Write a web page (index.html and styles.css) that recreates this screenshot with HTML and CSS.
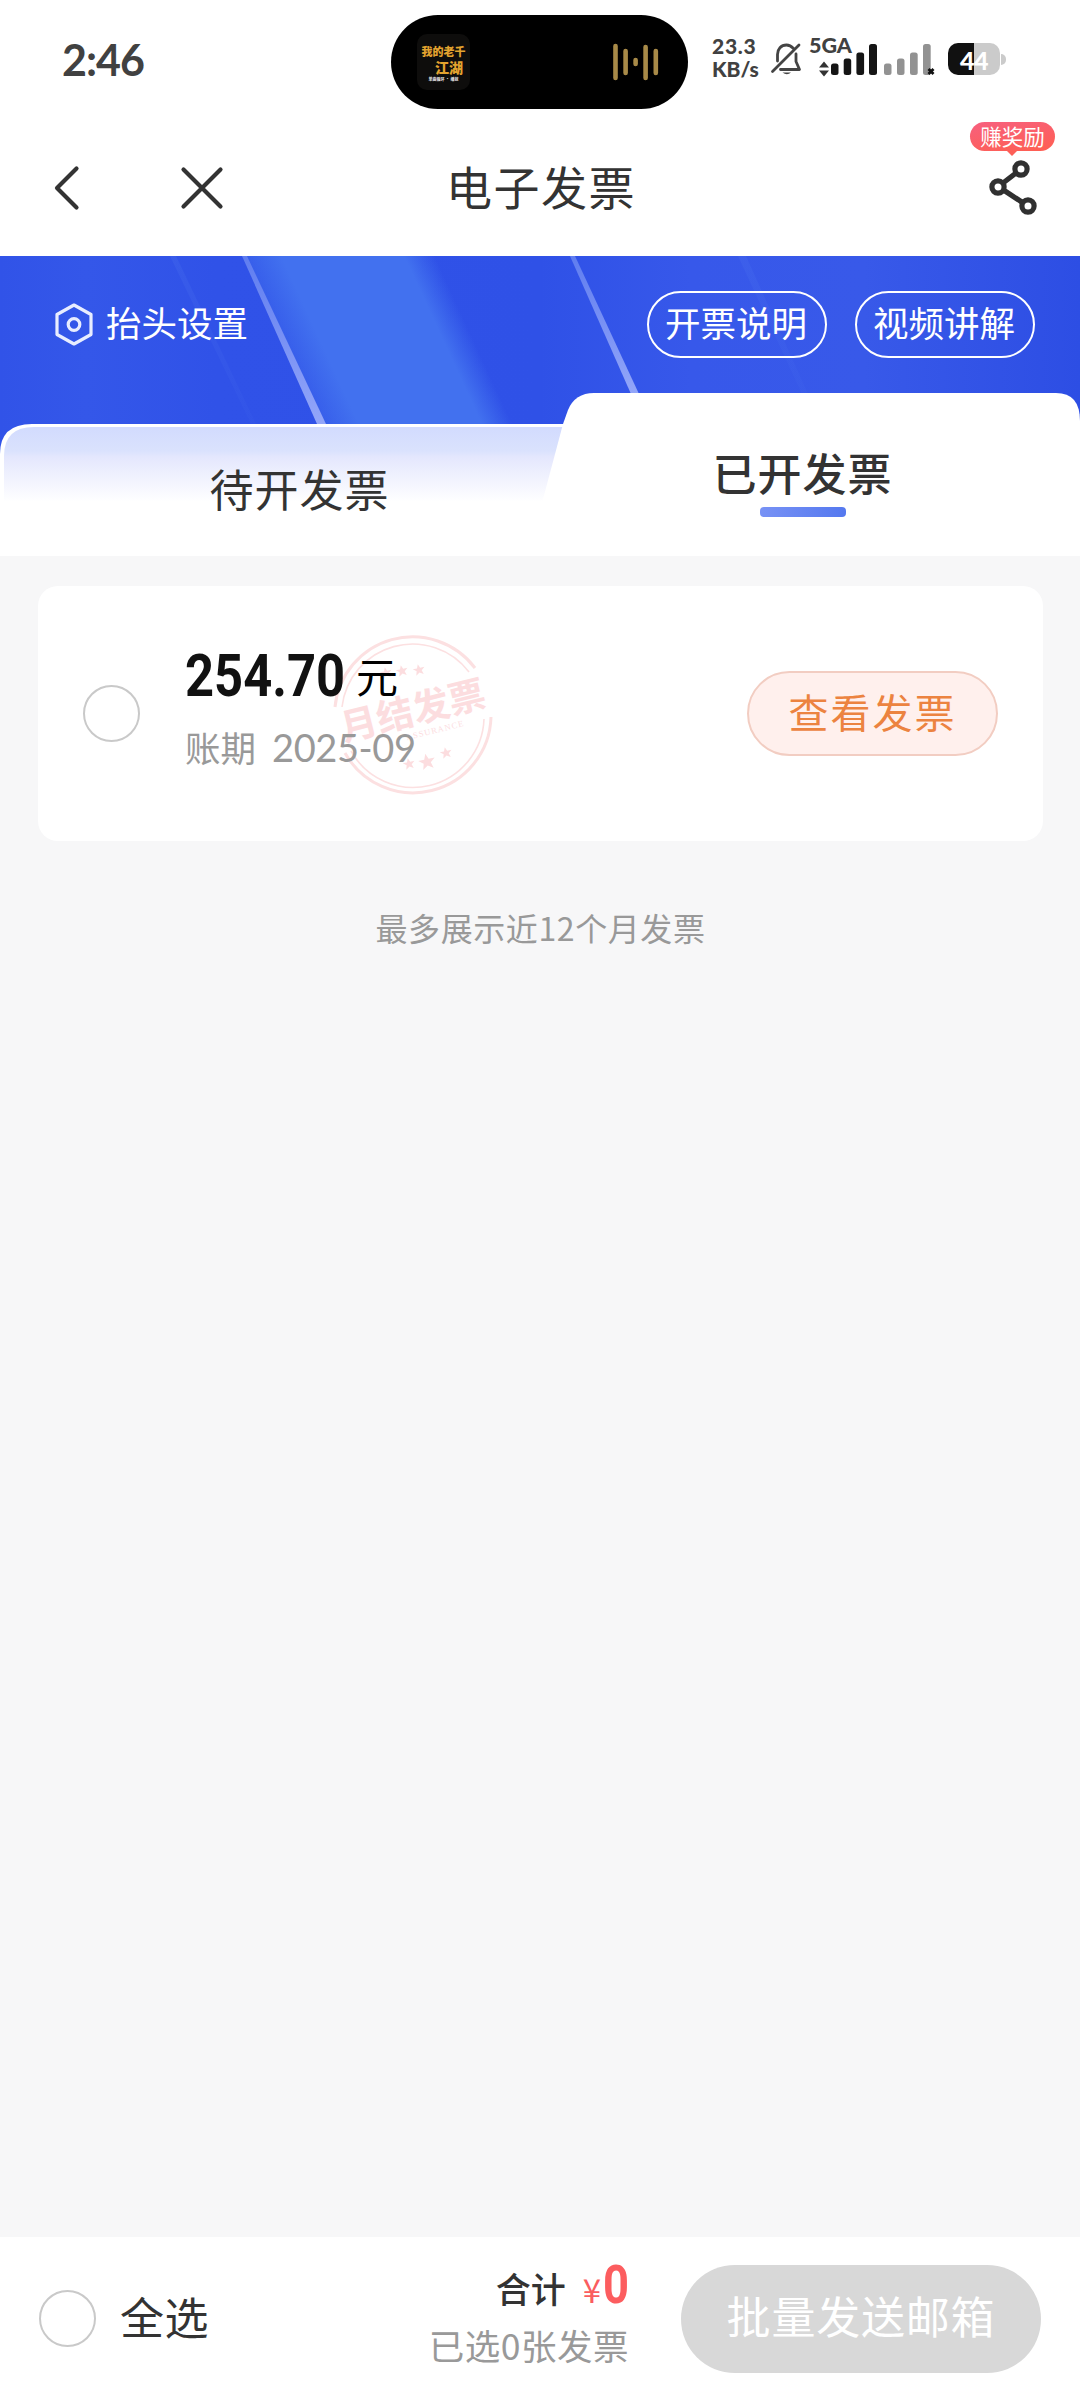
FILE: index.html
```html
<!DOCTYPE html>
<html lang="zh-CN">
<head>
<meta charset="utf-8">
<title>电子发票</title>
<link rel="stylesheet" href="styles.css">
</head>
<body>
<div class="screen">
  <header class="status-bar">
    <span class="clock">2:46</span>
    <div class="island">
      <div class="cover"><span>我的老千</span><span>江湖</span><small>单曲循环 · 播放</small></div>
      <svg class="wave" width="46" height="38" viewBox="0 0 46 38" stroke="#a88a48" stroke-width="4.6" stroke-linecap="round"><path d="M2.5 3v32M12.6 8v22M22.6 17v4M32.6 4v31M42.8 8v22"/></svg>
    </div>
    <div class="net-speed"><span>23.3</span><span>KB/s</span></div>
    <svg class="bell" width="32" height="34" viewBox="0 0 32 34" fill="none" stroke="#444" stroke-width="2.8" stroke-linecap="round" stroke-linejoin="round"><path d="M23.500 6.500C21 3.800 18.800 3 16.500 3 11 3 7.500 7.200 7.500 12.500V19M26 12V19.500L29.500 27.500H10.500M29 3 2.500 29.500"/><path d="M12.500 30.500H21Q17 34 12.500 30.500Z" fill="#444" stroke="none"/></svg>
    <div class="cell">
      <span class="cell-type">5GA</span>
      <svg width="66" height="16" viewBox="0 0 66 16"><path d="M1 6.500 6 .5l5 6zM1 9.500l5 6 5-6z" fill="#333"/></svg>
      <svg class="bars" width="47" height="31" viewBox="0 0 47 31" fill="#151515"><rect y="19.500" width="7.500" height="11.500" rx="2.500"/><rect x="12.700" y="14.500" width="7.500" height="16.500" rx="2.500"/><rect x="25.400" y="8.500" width="7.700" height="22.500" rx="2.500"/><rect x="38" y="0" width="8" height="31" rx="2.500"/></svg>
    </div>
    <svg class="bars-2" width="51" height="31" viewBox="0 0 51 31" fill="#929292"><rect y="19.500" width="7.500" height="11.500" rx="2.500"/><rect x="13" y="14.500" width="7.500" height="16.500" rx="2.500"/><rect x="26" y="8.500" width="7.700" height="22.500" rx="2.500"/><rect x="39" y="0" width="7.700" height="31" rx="2.500"/><path d="m44.500 25 5 5m0-5-5 5" stroke="#111" stroke-width="2.800"/></svg>
    <div class="battery"><span>44</span></div>
  </header>

  <nav class="nav-bar">
    <svg class="back" width="28" height="46" viewBox="0 0 28 46" fill="none" stroke="#333" stroke-width="4.200" stroke-linecap="round" stroke-linejoin="round"><path d="M23.500 3.500 4 23l19.500 19.500"/></svg>
    <svg class="close" width="46" height="46" viewBox="0 0 46 46" stroke="#333" stroke-width="4.200" stroke-linecap="round"><path d="m4.500 4.500 37 37m0-37-37 37"/></svg>
    <h1>电子发票</h1>
    <div class="share">
      <span class="reward">赚奖励</span>
      <svg width="50" height="56" viewBox="0 0 50 56" fill="none" stroke="#303030" stroke-width="5.200"><circle cx="33" cy="9" r="6.100"/><circle cx="10" cy="27" r="6.100"/><circle cx="40" cy="46" r="6.100"/><path d="m28 13-13 10M15.500 30l19 12.500"/></svg>
    </div>
  </nav>

  <section class="hero">
    <svg class="hero-art" width="1080" height="300" viewBox="0 0 1080 300">
      <defs>
        <linearGradient id="base"><stop offset="0" stop-color="#3153e8"/><stop offset=".08" stop-color="#3457e9"/><stop offset=".2" stop-color="#3052e8"/><stop offset=".5" stop-color="#2f51e7"/><stop offset=".64" stop-color="#3758ea"/><stop offset=".8" stop-color="#3859e9"/><stop offset="1" stop-color="#2d4ee4"/></linearGradient>
        <linearGradient id="beam" gradientUnits="userSpaceOnUse" x1="243" y1="0" x2="401" y2="-73"><stop offset="0" stop-color="#4271ef" stop-opacity=".35"/><stop offset=".2" stop-color="#4271ef"/><stop offset=".84" stop-color="#4271ef"/><stop offset="1" stop-color="#4271ef" stop-opacity="0"/></linearGradient>
        <linearGradient id="ray" x2="0" y2="1"><stop offset="0" stop-color="#5f7df0"/><stop offset="1" stop-color="#93a6f9"/></linearGradient>
        <linearGradient id="mist" x2="0" y2="1"><stop offset="0" stop-color="#d2dbfe"/><stop offset=".32" stop-color="#dae2fd"/><stop offset=".4" stop-color="#e4e7fd"/><stop offset="1" stop-color="#fff"/></linearGradient>
        <linearGradient id="edge" x2="0" y2="1"><stop offset="0" stop-color="#456aec" stop-opacity=".35"/><stop offset="1" stop-color="#456aec" stop-opacity=".1"/></linearGradient>
      </defs>
      <path fill="url(#base)" d="M0 0h1080v300H0z"/>
      <path fill="url(#beam)" d="M243 0h200l78 168H321z"/>
      <path fill="url(#ray)" d="M242 0h5l79 168h-9z"/>
      <path fill="url(#ray)" d="M570 0h5l64 138h-8z"/>
      <path fill="url(#edge)" d="M738 0h8l62 138h-6zM170 0h6l80 168h-5z"/>
      <path fill="#fff" d="M0 300V198Q0 168 32 168H1080V300z"/>
      <path fill="url(#mist)" d="M4 246V200Q4 171 34 171H566L543 246z"/>
      <path fill="#fff" d="M538 262 563 168 568 154Q575 137 594 137H1056Q1080 137 1080 165V300H538z"/>
    </svg>
    <div class="hero-row">
      <svg width="38" height="43" viewBox="0 0 38 43" fill="none" stroke="#e8edff" stroke-width="3.200" stroke-linejoin="round"><path d="M19 2 36 11.500v20L19 41 2 31.500v-20z"/><circle cx="19" cy="21.500" r="5.800"/></svg>
      <span class="setting">抬头设置</span>
      <a class="outline">开票说明</a>
      <a class="outline">视频讲解</a>
    </div>
    <div class="tabs">
      <div class="tab">待开发票</div>
      <div class="tab active">已开发票<i></i></div>
    </div>
  </section>

  <main>
    <article class="invoice">
      <svg class="stamp" width="180" height="180" viewBox="-90 -90 180 180" fill="none" stroke="#fce0e1">
        <path stroke-width="3" d="M-78-8A78 78 0 0 1 62-47M78 2A78 78 0 0 1-68 38"/>
        <path stroke-width="1.600" d="M-71-8A71 71 0 0 1 56-43M71 4A71 71 0 0 1-62 36"/>
        <g fill="#fcdddf" stroke="none">
          <g transform="rotate(-14)"><text class="stamp-name" x="-73" y="9">月结发票</text><text class="stamp-en" x="-12" y="23">ASSURANCE</text></g>
          <path id="star" transform="translate(-11 -44) rotate(-12)" d="m0-6 1.600 4h4.400L2.600.800 3.800 5 0 2.500-3.800 5-2.600.800-6-2h4.400z"/>
          <use href="#star" transform="translate(17 -1)"/><use href="#star" transform="translate(-16 2)"/>
          <use href="#star" transform="translate(7 93)"/><use href="#star" transform="translate(44 82)"/>
          <path transform="translate(14 47) rotate(-12) scale(1.400)" d="m0-6 1.600 4h4.400L2.600.800 3.800 5 0 2.500-3.800 5-2.600.800-6-2h4.400z"/>
        </g>
      </svg>
      <span class="check"></span>
      <div class="info">
        <div class="amount"><b>254.70</b><span>元</span></div>
        <div class="period"><span>账期</span><span class="date">2025-09</span></div>
      </div>
      <a class="view">查看发票</a>
    </article>
    <p class="hint">最多展示近12个月发票</p>
  </main>

  <footer class="action-bar">
    <span class="check"></span>
    <span class="all">全选</span>
    <div class="summary">
      <div class="total"><strong>合计</strong><em>¥</em><b>0</b></div>
      <div class="picked">已选0张发票</div>
    </div>
    <a class="send">批量发送邮箱</a>
  </footer>
</div>
</body>
</html>
```
FILE: styles.css
```css
* { box-sizing: border-box; margin: 0; padding: 0; }
body {
  width: 1080px;
  font-family: "Noto Sans CJK SC", sans-serif;
  color: #333;
  background: #f7f7f8;
}
svg { display: block; flex: none; }
.screen { display: flex; flex-direction: column; height: 2400px; overflow: hidden; }

/* status bar */
.status-bar { display: flex; height: 120px; background: #fff; }
.clock {
  width: 391px; padding: 34px 0 0 62px;
  font: 700 43px/52px Lato, sans-serif; letter-spacing: -1px; color: #414141;
}
.island {
  display: flex; justify-content: space-between; align-items: center;
  width: 297px; height: 94px; margin-top: 15px; padding: 0 29px 0 26px;
  border-radius: 47px; background: #000;
}
.cover {
  display: flex; flex-direction: column; align-items: center;
  width: 53px; height: 56px; padding-top: 9px; overflow: hidden;
  border-radius: 10px; background: #0e0d0c;
  font-size: 11px; font-weight: 900; line-height: 16px; color: #e3a32f; white-space: nowrap;
}
.cover span + span { align-self: flex-end; margin-right: 7px; font-size: 14px; }
.cover small { font-size: 4px; line-height: 8px; color: #ddd; }
.net-speed {
  display: flex; flex-direction: column; width: 58px; margin-left: 24px; padding-top: 34px;
  font: 900 21px/23px Lato, sans-serif; color: #414141;
}
.net-speed span:first-child { letter-spacing: .7px; }
.bell { margin: 42px 0 0 0; }
.cell { position: relative; width: 69px; margin-left: 7px; padding-top: 34px; }
.cell-type { display: block; height: 27px; font: 900 21.500px/23px Lato, sans-serif; color: #414141; }
.cell > svg { margin-left: 9px; }
.cell .bars { position: absolute; left: 13px; top: 43.500px; }
.bars-2 { margin: 43.500px 0 0 6px; }
.battery {
  position: relative; width: 52px; height: 32px; margin: 43px 0 0 13px;
  border-radius: 10px; background: linear-gradient(90deg, #111 50%, #cbcbcb 50%);
  text-align: center; font: 900 25px/34px Lato, sans-serif; letter-spacing: -.5px; color: #fff;
}
.battery::after {
  content: ""; position: absolute; left: 53px; top: 11px; width: 5px; height: 11px;
  border-radius: 0 6px 6px 0; background: #cbcbcb;
}

/* navigation */
.nav-bar { display: flex; height: 136px; padding: 45px 25px 0 53px; background: #fff; }
.close { margin-left: 98px; }
.nav-bar h1 {
  flex: 1; margin-top: -3px; padding-right: 113px; text-align: center;
  font-size: 46px; font-weight: 400; line-height: 46px; letter-spacing: 1.500px;
}
.share { display: flex; flex-direction: column; align-items: center; width: 85px; margin-top: -43px; }
.share svg { margin: 9px 0 0 0; }
.reward {
  position: relative; width: 85px; height: 29px; border-radius: 15px;
  background: linear-gradient(170deg, #f7607f, #fe5f55 90%);
  text-align: center; font-size: 21.500px; line-height: 28px; color: #fff;
}
.reward::after {
  content: ""; position: absolute; left: 37px; top: 29px;
  border: 5px solid transparent; border-top-color: #fd5f57; border-bottom: 0;
}

/* banner and tabs */
.hero { position: relative; height: 300px; }
.hero-art { position: absolute; inset: 0; }
.hero-row { position: relative; display: flex; align-items: center; height: 137px; padding: 0 45px 0 55px; }
.setting { flex: 1; margin: -6px 0 0 13px; font-size: 35.500px; color: #fff; line-height: 40px; }
.outline {
  width: 180px; height: 67px; border: 2px solid #fff; border-radius: 34px;
  padding-right: 2px; text-align: center; font-size: 35.500px; line-height: 58px; color: #fff;
}
.outline + .outline { margin-left: 28px; }
.tabs { position: relative; display: flex; }
.tab { width: 599px; padding-top: 65px; text-align: center; font-size: 44px; line-height: 60px; letter-spacing: 1px; }
.tab.active { width: 407px; padding-top: 49px; font-weight: 500; }
.tab i {
  display: block; width: 86px; height: 10px; margin: 5px auto 0; border-radius: 4px;
  background: linear-gradient(100deg, #7892f5, #5478ef);
}

/* invoice list */
main { flex: 1; padding: 30px 37px 0 38px; }
.invoice {
  position: relative; display: flex; align-items: center; height: 255px; padding: 0 45px;
  border-radius: 20px; background: #fff;
}
.stamp { position: absolute; left: 285px; top: 39px; }
.stamp-name { font-size: 37px; font-weight: 700; }
.stamp-en { font: 8.500px "Liberation Serif", serif; letter-spacing: 1px; }
.check { flex: none; width: 57px; height: 57px; border: 2px solid #c9c9c9; border-radius: 50%; }
.info { position: relative; flex: 1; margin: -9px 0 0 45px; }
.amount { display: flex; align-items: baseline; height: 76px; line-height: 70px; color: #000; }
.amount b {
  width: 171px; font: 700 60px/70px Roboto, sans-serif; color: #111;
  transform: scaleX(.845); transform-origin: left;
}
.amount span { position: relative; top: -3px; font-size: 42px; }
.period { display: flex; align-items: baseline; font-size: 35.500px; line-height: 60px; color: #999; }
.date { margin-left: 16px; font: 400 38px/60px Lato, sans-serif; letter-spacing: -.4px; }
.view {
  width: 251px; height: 85px; border: 2px solid #f2cdc2; border-radius: 43px; background: #fff0ed;
  text-align: center; font-size: 40px; line-height: 77px; letter-spacing: 2px; color: #ec8340;
}
.hint { margin-top: 63px; text-align: center; font-size: 32px; line-height: 46px; letter-spacing: .6px; color: #999; }

/* bottom bar */
.action-bar { display: flex; align-items: center; height: 163px; padding: 0 39px; background: #fff; }
.all { margin: -5px 0 0 24px; font-size: 44px; letter-spacing: .5px; }
.summary { flex: 1; display: flex; flex-direction: column; align-items: flex-end; margin: -8px 52px 0 0; }
.total { display: flex; align-items: baseline; height: 60px; line-height: 52px; }
.total strong { font-size: 35px; font-weight: 500; }
.total em { margin: 0 2px 0 17px; font: 400 33px/52px "Noto Sans CJK SC", sans-serif; color: #fa5d5f; }
.total b {
  width: 26px; font: 700 54px/52px Roboto, sans-serif; color: #fc5d5f;
  transform: scaleX(.84); transform-origin: left;
}
.picked { font-size: 35.500px; line-height: 52px; letter-spacing: .5px; color: #999; }
.send {
  width: 360px; height: 108px; border-radius: 54px; background: #d8d8d8;
  text-align: center; font-size: 44px; line-height: 101px; letter-spacing: .8px; color: #fff;
}
```
